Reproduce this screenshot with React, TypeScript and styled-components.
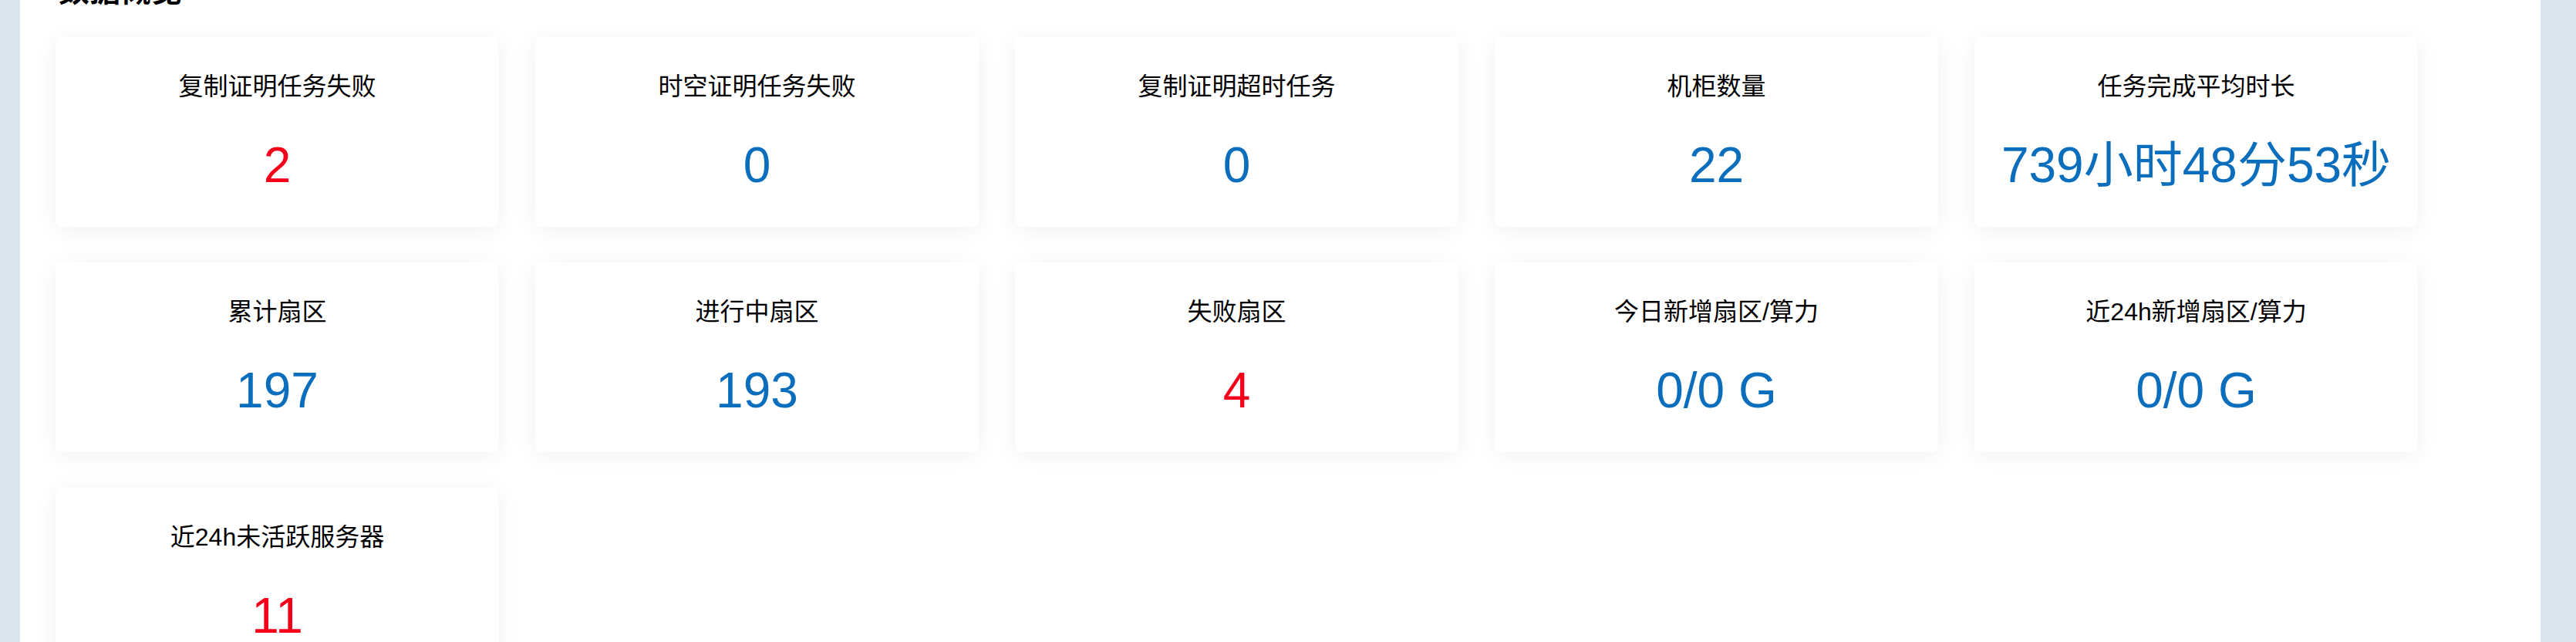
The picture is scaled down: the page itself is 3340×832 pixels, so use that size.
import React from "react";
import styled, { createGlobalStyle } from "styled-components";

type ValueProps = {
    tone?: "danger" | "normal"
}

const GlobalStyle = createGlobalStyle`
    html, body {
        margin: 0;
        padding: 0;
        background-color: #dce6ee;
        overflow: hidden;
    }
    * {
        box-sizing: border-box;
    }
`;

export const Page = styled.div`
    display: flex;
    width: 100vw;
    height: 100vh;
    padding-left: 26px;
    background-color: #dce6ee;
`;

export const Panel = styled.main`
    display: flex;
    flex-direction: column;
    width: 3268px;
    height: 100%;
    background-color: #ffffff;
    padding-left: 46px;
`;

export const Heading = styled.h2`
    margin: -32px 0 0 4px;
    font-family: "Liberation Sans", "Noto Sans CJK SC", sans-serif;
    font-size: 40px;
    line-height: 40px;
    font-weight: bold;
    color: #000;
`;

export const Grid = styled.section`
    display: grid;
    grid-template-columns: repeat(5, 575px);
    column-gap: 47px;
    row-gap: 46px;
    margin-top: 40px;
`;

export const Card = styled.div`
    display: flex;
    flex-direction: column;
    align-items: center;
    gap: 54px;
    height: 246px;
    padding-top: 48px;
    background-color: #fff;
    border-radius: 8px;
    box-shadow: 0 4px 30px rgba(0, 0, 0, 0.06);
`;

export const Label = styled.div`
    font-family: "Liberation Sans", "Noto Sans CJK SC", sans-serif;
    font-size: 32px;
    line-height: 32px;
    color: #000;
    white-space: nowrap;
`;

export const Value = styled.div<ValueProps>`
    font-family: "Liberation Sans", "Noto Sans CJK SC", sans-serif;
    font-size: 64px;
    line-height: 64px;
    height: 64px;
    color: ${props => props.tone === "danger" ? "#f5001a" : "#0a6ebd"};
    white-space: nowrap;
`;

const stats: { label: string, value: string, danger?: boolean }[] = [
    { label: "复制证明任务失败", value: "2", danger: true },
    { label: "时空证明任务失败", value: "0" },
    { label: "复制证明超时任务", value: "0" },
    { label: "机柜数量", value: "22" },
    { label: "任务完成平均时长", value: "739小时48分53秒" },
    { label: "累计扇区", value: "197" },
    { label: "进行中扇区", value: "193" },
    { label: "失败扇区", value: "4", danger: true },
    { label: "今日新增扇区/算力", value: "0/0 G" },
    { label: "近24h新增扇区/算力", value: "0/0 G" },
    { label: "近24h未活跃服务器", value: "11", danger: true },
];

export default function App() {
    return (
        <Page>
            <GlobalStyle />
            <Panel>
                <Heading>数据概览</Heading>
                <Grid>
                    {stats.map(s => (
                        <Card key={s.label}>
                            <Label>{s.label}</Label>
                            <Value tone={s.danger ? "danger" : "normal"}>{s.value}</Value>
                        </Card>
                    ))}
                </Grid>
            </Panel>
        </Page>
    );
}
